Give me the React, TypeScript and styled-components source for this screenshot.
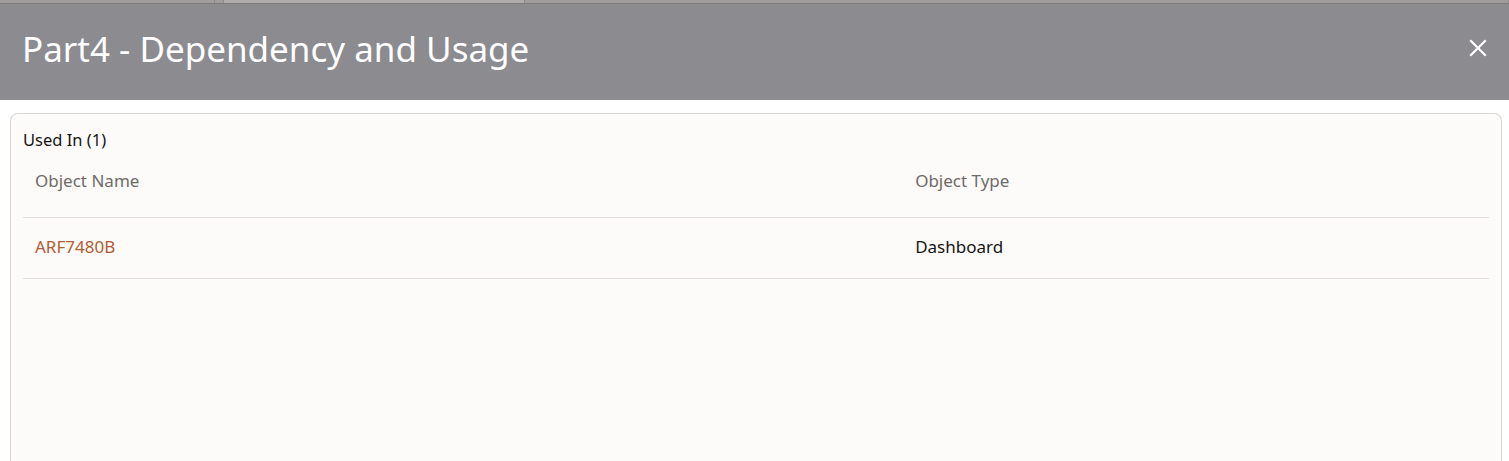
import React from "react";
import styled, { createGlobalStyle } from "styled-components";

const GlobalStyle = createGlobalStyle`
  html, body {
    margin: 0;
    padding: 0;
    background: #ffffff;
    font-family: "Noto Sans", "Open Sans", sans-serif;
    overflow: hidden;
  }
`;

const Page = styled.div`
  display: flex;
  flex-direction: column;
  height: 461px;
`;

const BackStrip = styled.div`
  display: flex;
  height: 3px;
  background: #a09e9b;
  border-bottom: 1px solid #7d7c7a;
`;

const BackTab = styled.div<{ width: number; light?: boolean }>`
  width: ${({ width }) => width}px;
  background: ${({ light }) => (light ? "#aeaca9" : "#a09e9b")};
  border-right: 1px solid #8c8a87;
`;

const Header = styled.header`
  display: flex;
  align-items: center;
  justify-content: space-between;
  height: 96px;
  padding: 0 22px 8px 22px;
  background: #8b8b90;
  box-sizing: border-box;
`;

const Title = styled.h1`
  margin: 0;
  font-size: 35px;
  font-weight: 400;
  color: #ffffff;
  letter-spacing: 0;
`;

const CloseButton = styled.button`
  display: flex;
  align-items: center;
  justify-content: center;
  width: 18px;
  height: 18px;
  padding: 0;
  border: 0;
  background: transparent;
  cursor: pointer;
`;

const Body = styled.main`
  flex: 1;
  display: flex;
  padding: 13px 7px 0 10px;
  min-height: 0;
`;

const Panel = styled.section`
  flex: 1;
  display: flex;
  flex-direction: column;
  padding: 16px 12px 0 12px;
  background: #fcfbfa;
  border: 1px solid #dad7d4;
  border-bottom: 0;
  border-radius: 8px 8px 0 0;
`;

const SectionTitle = styled.div`
  font-size: 16.5px;
  line-height: 20px;
  color: #161513;
`;

const Table = styled.table`
  width: 100%;
  border-collapse: collapse;
  table-layout: fixed;
`;

const HeadCell = styled.th<{ w?: string }>`
  width: ${({ w }) => w ?? "auto"};
  height: 60px;
  padding: 0 12px 7px;
  text-align: left;
  font-weight: 400;
  font-size: 17px;
  color: #6f6b67;
  border-bottom: 1px solid #e2dfdc;
`;

const Cell = styled.td<{ link?: boolean }>`
  height: 56px;
  padding: 0 12px 4px;
  font-size: 17px;
  color: ${({ link }) => (link ? "#b25c33" : "#161513")};
  border-bottom: 1px solid #e2dfdc;
`;

const rows = [{ name: "ARF7480B", type: "Dashboard" }];

export default function App() {
  return (
    <>
      <GlobalStyle />
      <Page>
        <BackStrip>
          <BackTab width={215} />
          <BackTab width={8} />
          <BackTab width={300} light />
          <BackTab width={986} />
        </BackStrip>
        <Header>
          <Title>Part4 - Dependency and Usage</Title>
          <CloseButton aria-label="Close">
            <svg width="18" height="18" viewBox="0 0 18 18">
              <path d="M2 2 L16 16 M16 2 L2 16" stroke="#ffffff" strokeWidth="2.2" strokeLinecap="square" />
            </svg>
          </CloseButton>
        </Header>
        <Body>
          <Panel>
            <SectionTitle>Used In ({rows.length})</SectionTitle>
            <Table>
              <thead>
                <tr>
                  <HeadCell w="58.4%">Object Name</HeadCell>
                  <HeadCell>Object Type</HeadCell>
                </tr>
              </thead>
              <tbody>
                {rows.map((r) => (
                  <tr key={r.name}>
                    <Cell link>{r.name}</Cell>
                    <Cell>{r.type}</Cell>
                  </tr>
                ))}
              </tbody>
            </Table>
          </Panel>
        </Body>
      </Page>
    </>
  );
}
